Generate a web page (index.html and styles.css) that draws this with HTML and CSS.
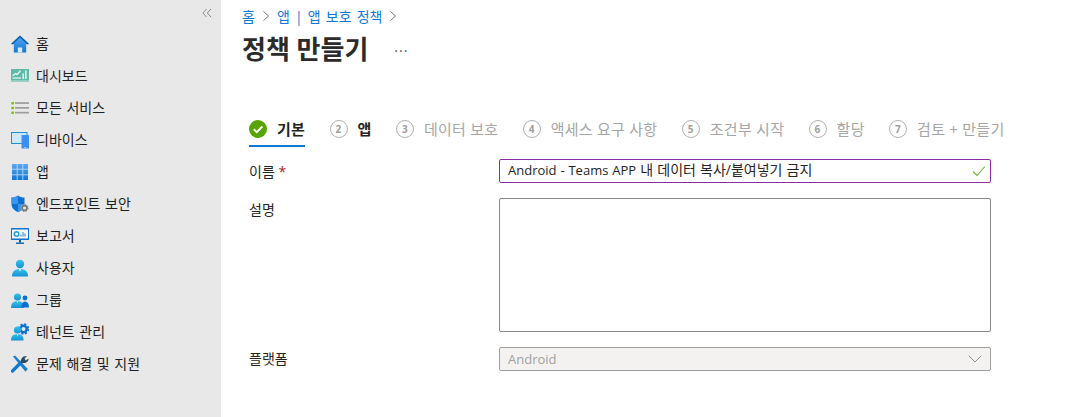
FILE: index.html
```html
<!DOCTYPE html>
<html lang="ko">
<head>
  <meta charset="UTF-8" />
  <title>정책 만들기</title>
  <link rel="stylesheet" href="styles.css">
</head>
<body>

<!-- 아이콘 공용 그라디언트 -->
<svg class="defs" width="0" height="0">
  <defs>
    <linearGradient id="gUser" x1="0" y1="0" x2="0" y2="1"><stop offset="0" stop-color="#37c2ee"/><stop offset="1" stop-color="#1490d2"/></linearGradient>
    <linearGradient id="gBlue" x1="0" y1="0" x2="0" y2="1"><stop offset="0" stop-color="#5ea7ef"/><stop offset="1" stop-color="#0f78d4"/></linearGradient>
  </defs>
</svg>

<!-- 왼쪽 메뉴 -->
<nav class="sidebar">
  <div class="collapse">
    <svg width="10" height="10" viewBox="0 0 10 10"><path d="M4.5 1 L0.8 5 L4.5 9 M9 1 L5.3 5 L9 9" fill="none" stroke="#8a8a8a" stroke-width="1"/></svg>
  </div>
  <a class="nav-item">
    <svg class="nav-icon" viewBox="0 0 18 18"><path d="M9 0.5 L0 9 L2.8 9 L2.8 17.5 L15.2 17.5 L15.2 9 L18 9 Z" fill="url(#gBlue)"/><path d="M9 0.5 L0 9 L1.6 9.4 L9 2.6 L16.4 9.4 L18 9 Z" fill="#0a5ea8"/><rect x="6.8" y="12.5" width="4.4" height="5" fill="#d8e9f8"/></svg>
    <span>홈</span>
  </a>
  <a class="nav-item">
    <svg class="nav-icon" viewBox="0 0 18 18"><rect x="0" y="2" width="18" height="12.5" fill="#5fbaa8"/><rect x="0" y="13" width="18" height="1.5" fill="#8fcfc2"/><path d="M1.5 8.8 L4.5 6.5 L6 7.6 L9.5 3.8" fill="none" stroke="#eef8f6" stroke-width="1.3"/><path d="M1.5 11 H10" stroke="#eef8f6" stroke-width="1.2"/><rect x="11.5" y="6.5" width="1.4" height="5.5" fill="#eef8f6"/><rect x="14.2" y="3.5" width="1.4" height="8.5" fill="#eef8f6"/></svg>
    <span>대시보드</span>
  </a>
  <a class="nav-item">
    <svg class="nav-icon" viewBox="0 0 18 18"><g fill="#7fba00"><rect x="0.4" y="3" width="2.4" height="2.4"/><rect x="0.4" y="7.8" width="2.4" height="2.4"/><rect x="0.4" y="12.6" width="2.4" height="2.4"/></g><g fill="#9c9c9c"><rect x="4" y="3.2" width="14" height="1.7"/><rect x="4" y="8" width="14" height="1.7"/><rect x="4" y="12.8" width="14" height="1.7"/></g></svg>
    <span>모든 서비스</span>
  </a>
  <a class="nav-item">
    <svg class="nav-icon" viewBox="0 0 18 18"><rect x="0.5" y="1.5" width="15.5" height="11" fill="#cde8fa" stroke="#1e8ed8" stroke-width="1"/><rect x="10.5" y="4" width="7.5" height="13.5" rx="0.6" fill="#3c8fec"/><rect x="13.5" y="16" width="1.5" height="0.8" fill="#cfe4f6"/></svg>
    <span>디바이스</span>
  </a>
  <a class="nav-item">
    <svg class="nav-icon" viewBox="0 0 18 18"><rect x="1" y="1" width="16" height="16" fill="url(#gBlue)"/><path d="M6.2 1 V17 M11.8 1 V17 M1 6.2 H17 M1 11.8 H17" stroke="#c6ddf5" stroke-width="0.8"/></svg>
    <span>앱</span>
  </a>
  <a class="nav-item">
    <svg class="nav-icon" viewBox="0 0 18 18"><path d="M7 0.5 C5 2 3 2.5 0.5 2.5 V9 C0.5 13 3.5 15.5 7 17 C10.5 15.5 13.5 13 13.5 9 V2.5 C11 2.5 9 2 7 0.5 Z" fill="#0f6fd0"/><path d="M7 0.5 C5 2 3 2.5 0.5 2.5 V9 L7 9 Z M7 9 H13.5 C13.5 13 10.5 15.5 7 17 Z" fill="#3a96ea"/><circle cx="13.5" cy="13" r="3.6" fill="#e8e8e8"/><circle cx="13.5" cy="13" r="2.4" fill="none" stroke="#7a7a7a" stroke-width="1.8"/><circle cx="13.5" cy="13" r="3.6" fill="none" stroke="#7a7a7a" stroke-width="1" stroke-dasharray="1.5 1.3"/></svg>
    <span>엔드포인트 보안</span>
  </a>
  <a class="nav-item">
    <svg class="nav-icon" viewBox="0 0 18 18"><rect x="0" y="1" width="18" height="12" rx="0.6" fill="#1273c8"/><rect x="1" y="2.5" width="16" height="9" fill="#f2f8fd"/><circle cx="5.5" cy="7" r="2.3" fill="none" stroke="#18a0e0" stroke-width="1.4"/><path d="M10 9.5 V7.5 M12 9.5 V5 M14 9.5 V6.5" stroke="#5a8fc8" stroke-width="1.2"/><rect x="8" y="13" width="2" height="2.5" fill="#0a5ea8"/><rect x="5" y="15.5" width="8" height="1.4" fill="#0a5ea8"/></svg>
    <span>보고서</span>
  </a>
  <a class="nav-item">
    <svg class="nav-icon" viewBox="0 0 18 18"><circle cx="9" cy="5" r="4.2" fill="url(#gUser)"/><path d="M1 17.5 C1 12 4 10 9 10 C14 10 17 12 17 17.5 Z" fill="url(#gUser)"/><path d="M7.8 10 L9 12.8 L10.2 10 Z" fill="#e8f6fc"/></svg>
    <span>사용자</span>
  </a>
  <a class="nav-item">
    <svg class="nav-icon" viewBox="0 0 18 18"><path d="M0 17 C0 12 2.5 10 6.5 10 C10.5 10 13 12 13 17 Z" fill="url(#gUser)"/><circle cx="6.5" cy="6" r="3.6" fill="url(#gUser)"/><circle cx="14" cy="7" r="2.4" fill="#0f6fd0"/><path d="M10.5 16.5 C10.5 12.5 11.5 10.5 14 10.5 C16.5 10.5 18 12.5 18 16.5 Z" fill="#0f6fd0"/><path d="M5.6 10 L6.5 12.4 L7.4 10 Z" fill="#e8f6fc"/></svg>
    <span>그룹</span>
  </a>
  <a class="nav-item">
    <svg class="nav-icon" viewBox="0 0 18 18"><circle cx="12.5" cy="6" r="3.2" fill="none" stroke="#0f6fd0" stroke-width="2.4"/><circle cx="12.5" cy="6" r="4.8" fill="none" stroke="#0f6fd0" stroke-width="1.8" stroke-dasharray="2 1.8"/><circle cx="6.5" cy="7" r="3.6" fill="url(#gUser)"/><path d="M0 17.5 C0 13 2.5 11 6.5 11 C10.5 11 12.5 13 12.5 17.5 Z" fill="url(#gUser)"/><path d="M5.6 11 L6.5 13.4 L7.4 11 Z" fill="#e8f6fc"/></svg>
    <span>테넌트 관리</span>
  </a>
  <a class="nav-item">
    <svg class="nav-icon" viewBox="0 0 18 18"><path d="M2 1.5 L4 0.5 L16.8 14 L14.5 16.8 Z" fill="#1d7fc9"/><path d="M1.5 16 L10.5 7" stroke="#0f78d4" stroke-width="3.2" stroke-linecap="round"/><path d="M10 7.5 C9.5 3.5 12 0.5 16 1 L13.5 3.5 L14.8 5.5 L17.5 3.5 C17.8 7 14 9 10 7.5 Z" fill="#33475b"/></svg>
    <span>문제 해결 및 지원</span>
  </a>
</nav>

<main class="content">
  <div class="breadcrumb">
    <a>홈</a>
    <svg class="crumb-sep" viewBox="0 0 8 12"><path d="M1.5 1.5 L6.5 6 L1.5 10.5" fill="none" stroke="#777" stroke-width="1"/></svg>
    <a>앱 | 앱 보호 정책</a>
    <svg class="crumb-sep" viewBox="0 0 8 12"><path d="M1.5 1.5 L6.5 6 L1.5 10.5" fill="none" stroke="#777" stroke-width="1"/></svg>
  </div>

  <div class="title-row">
    <h1>정책 만들기</h1>
    <span class="more">···</span>
  </div>

  <!-- 단계 탭 -->
  <div class="steps">
    <div class="step active">
      <svg class="step-check" viewBox="0 0 18 18"><circle cx="9" cy="9" r="9" fill="#57a300"/><path d="M4.8 9.3 L7.8 12.2 L13.3 6.5" fill="none" stroke="#fff" stroke-width="2"/></svg>
      <span>기본</span>
    </div>
    <div class="step current"><i class="num">2</i><span>앱</span></div>
    <div class="step"><i class="num">3</i><span>데이터 보호</span></div>
    <div class="step"><i class="num">4</i><span>액세스 요구 사항</span></div>
    <div class="step"><i class="num">5</i><span>조건부 시작</span></div>
    <div class="step"><i class="num">6</i><span>할당</span></div>
    <div class="step"><i class="num">7</i><span>검토 + 만들기</span></div>
  </div>

  <div class="form">
    <label class="form-label form-label-name">이름 <b class="req">*</b></label>
    <div class="input input-valid">
      <span class="input-text"><span class="latin">Android - Teams APP</span> 내 데이터 복사/붙여넣기 금지</span>
      <svg class="valid-check" viewBox="0 0 14 12"><path d="M1 6.5 L5 10.5 L13 1.5" fill="none" stroke="#6bb23a" stroke-width="1.1"/></svg>
    </div>

    <label class="form-label">설명</label>
    <div class="textarea"></div>

    <label class="form-label">플랫폼</label>
    <div class="input input-disabled">
      <span class="latin">Android</span>
      <svg class="chevron" viewBox="0 0 14 8"><path d="M0.7 0.7 L7 7 L13.3 0.7" fill="none" stroke="#8f8f8f" stroke-width="1"/></svg>
    </div>
  </div>
</main>

</body>
</html>
```

FILE: styles.css
```css
* { margin: 0; padding: 0; box-sizing: border-box; }

html, body {
  height: 100%;
}

body {
  display: flex;
  background: #fff;
  color: #252423;
  font-family: 'Open Sans', 'Noto Sans CJK KR', sans-serif;
  font-size: 14px;
  overflow: hidden;
}

.defs {
  position: absolute;
}

.latin {
  font-size: 13px;
}

/* 왼쪽 메뉴 */
.sidebar {
  width: 221px;
  flex-shrink: 0;
  background: #e8e8e8;
}

.collapse {
  height: 28px;
  display: flex;
  justify-content: flex-end;
  padding: 8px 9px 0 0;
}

.nav-item {
  height: 32px;
  display: flex;
  align-items: center;
  gap: 7px;
  padding-left: 11px;
  color: #1f1f1f;
  word-spacing: 1px;
  line-height: 30px;
}

.nav-icon {
  width: 18px;
  height: 18px;
  flex-shrink: 0;
}

/* 본문 */
.content {
  flex: 1;
  padding: 7px 0 0 21px;
}

.breadcrumb {
  height: 18px;
  display: flex;
  align-items: center;
  gap: 7px;
  color: #0f78d4;
  word-spacing: 1.5px;
}

.crumb-sep {
  width: 8px;
  height: 12px;
}

.title-row {
  display: flex;
  align-items: center;
  gap: 26px;
  height: 36px;
  margin-top: 5px;
}

h1 {
  font-size: 26px;
  font-weight: 700;
  color: #2b2b2b;
}

.more {
  color: #555;
  font-size: 14px;
  letter-spacing: 1px;
  margin-top: 4px;
}

.steps {
  display: flex;
  gap: 24.4px;
  margin-top: 54px;
  margin-left: 7px;
  height: 39px;
}

.step {
  display: flex;
  align-items: flex-start;
  gap: 10px;
  color: #a6a6a6;
  font-size: 15px;
  line-height: 18px;
  letter-spacing: 0.25px;
}

.step.active {
  color: #252423;
  font-weight: 700;
  border-bottom: 2px solid #0f78d4;
  height: 27px;
}

.step.current {
  color: #252423;
  font-weight: 700;
}

.step-check {
  width: 18px;
  height: 18px;
}

.num {
  width: 18px;
  height: 18px;
  border: 1px solid #b0b0b0;
  border-radius: 50%;
  font-style: normal;
  font-size: 10px;
  font-weight: 700;
  line-height: 16px;
  text-align: center;
  color: #a0a0a0;
}

.form {
  display: grid;
  grid-template-columns: 250px 492px;
  margin: 0 0 0 7px;
  row-gap: 15px;
}

.form-label {
  padding-top: 3px;
  color: #252423;
  line-height: 18px;
}

.form-label-name {
  padding-top: 4px;
}

.req {
  color: #a4262c;
  font-weight: 400;
}

.input {
  height: 24px;
  display: flex;
  align-items: center;
  justify-content: space-between;
  padding: 0 8px;
  border: 1px solid #8a8886;
  border-radius: 2px;
}

.input-text {
  word-spacing: 0.5px;
  line-height: 20px;
  margin-top: -2px;
}

.input-valid {
  border-color: #8a2da5;
  padding-right: 4px;
}

.valid-check {
  width: 14px;
  height: 12px;
}

.textarea {
  height: 134px;
  border: 1px solid #8a8886;
  border-radius: 2px;
}

.input-disabled {
  background: #f3f2f1;
  border-color: #a19f9d;
  color: #a19f9d;
}

.chevron {
  width: 14px;
  height: 8px;
}
```
